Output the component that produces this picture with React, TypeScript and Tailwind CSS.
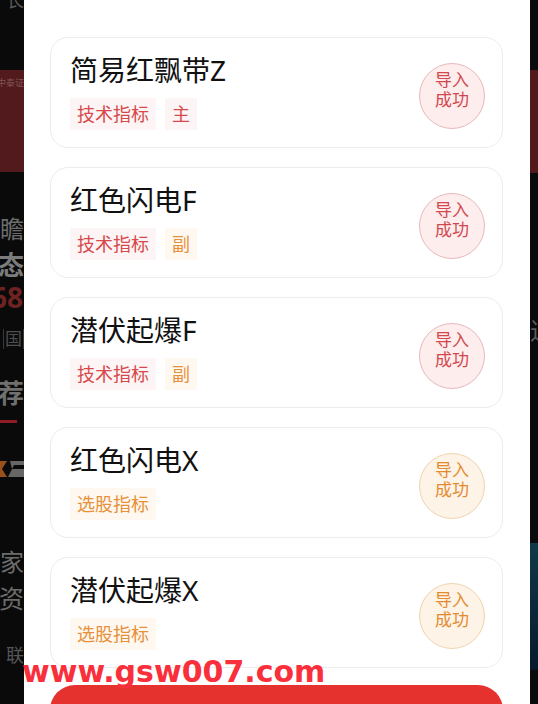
import { memo } from "react";

type Tone = "red" | "orange";

type Indicator = {
  title: string;
  tags: { label: string; tone: Tone }[];
  tone: Tone;
};

const indicators: Indicator[] = [
  {
    title: "简易红飘带Z",
    tags: [
      { label: "技术指标", tone: "red" },
      { label: "主", tone: "red" },
    ],
    tone: "red",
  },
  {
    title: "红色闪电F",
    tags: [
      { label: "技术指标", tone: "red" },
      { label: "副", tone: "orange" },
    ],
    tone: "red",
  },
  {
    title: "潜伏起爆F",
    tags: [
      { label: "技术指标", tone: "red" },
      { label: "副", tone: "orange" },
    ],
    tone: "red",
  },
  {
    title: "红色闪电X",
    tags: [{ label: "选股指标", tone: "orange" }],
    tone: "orange",
  },
  {
    title: "潜伏起爆X",
    tags: [{ label: "选股指标", tone: "orange" }],
    tone: "orange",
  },
];

const Tag = ({ label, tone }: { label: string; tone: Tone }) => (
  <div
    className={`h-[32px] px-[7px] text-[18px] leading-[32px] whitespace-nowrap ${
      tone === "red" ? "bg-[#fdf5f5] text-[#d6484a]" : "bg-[#fff8f0] text-[#e6913a]"
    }`}
  >
    {label}
  </div>
);

const Badge = ({ tone }: { tone: Tone }) => (
  <div
    className={`mt-[7px] w-[66px] h-[66px] shrink-0 rounded-full border flex flex-col items-center justify-center pb-[12px] text-[17px] leading-[20px] ${
      tone === "red"
        ? "bg-[#fdeded] border-[#e8b9bc] text-[#d2474d]"
        : "bg-[#fdf3e6] border-[#efd4af] text-[#e48b30]"
    }`}
  >
    <span>导入</span>
    <span>成功</span>
  </div>
);

const Card = memo(({ item }: { item: Indicator }) => (
  <div className="h-[111px] shrink-0 rounded-[18px] border border-[#ececec] bg-white flex flex-row items-center justify-between pl-[19px] pr-[17px]">
    <div className="self-stretch flex flex-col pt-[14px]">
      <div className="text-[28px] leading-[36px] text-[#111111]">{item.title}</div>
      <div className="mt-[10px] flex flex-row gap-[9px]">
        {item.tags.map((t) => (
          <Tag key={t.label} label={t.label} tone={t.tone} />
        ))}
      </div>
    </div>
    <Badge tone={item.tone} />
  </div>
));

const Row = ({
  className = "",
  children,
}: {
  className?: string;
  children?: React.ReactNode;
}) => (
  <div className={`shrink-0 flex flex-row justify-end items-center overflow-hidden ${className}`}>
    {children}
  </div>
);

const LeftStrip = () => (
  <div className="w-[24px] shrink-0 h-full flex flex-col overflow-hidden bg-[#0a0a0a] text-[#6c6c6c]">
    <Row className="h-[10px] items-end">
      <span className="shrink-0 text-[18px] leading-[20px] text-[#5a5a5a]">长</span>
    </Row>
    <div className="mt-[60px] h-[102px] shrink-0 bg-[#531a1d] flex flex-col justify-start pt-[8px] overflow-hidden">
      <div className="flex flex-row justify-end overflow-hidden">
        <span className="shrink-0 text-[9px] leading-[10px] text-[#7e5656]">中泰证</span>
      </div>
    </div>
    <Row className="mt-[44px] h-[26px]">
      <span className="shrink-0 text-[24px] leading-[26px]">瞻</span>
    </Row>
    <Row className="mt-[9px] h-[28px]">
      <span className="shrink-0 text-[26px] leading-[28px] font-bold text-[#7c7c7c]">间态</span>
    </Row>
    <Row className="mt-[4px] h-[28px]">
      <span className="shrink-0 text-[28px] leading-[28px] font-bold text-[#6e2222] pr-[1px]">368</span>
    </Row>
    <Row className="mt-[18px] h-[20px]">
      <span className="shrink-0 text-[17px] leading-[20px] text-[#4f4f4f] border border-[#3a3a3a] px-[1px]">国</span>
    </Row>
    <Row className="mt-[30px] h-[28px]">
      <span className="shrink-0 text-[26px] leading-[28px] font-bold text-[#707070]">推荐</span>
    </Row>
    <div className="mt-[13px] h-[3px] w-[17px] shrink-0 bg-[#8e1c25]" />
    <Row className="mt-[34px] h-[24px]">
      <svg width="24" height="24" viewBox="0 0 24 24" className="shrink-0">
        <path d="M0 4 L7 4 L2 12 L7 20 L0 20 Z" fill="#9a501a" />
        <path d="M10 4 L24 4 L24 8 L14 8 L12 12 L24 12 L24 20 L8 20 L12 12 Z" fill="#666666" />
      </svg>
    </Row>
    <Row className="mt-[68px] h-[26px]">
      <span className="shrink-0 text-[24px] leading-[26px]">国家</span>
    </Row>
    <Row className="mt-[9px] h-[28px]">
      <span className="shrink-0 text-[25px] leading-[28px]">投资</span>
    </Row>
    <Row className="mt-[33px] h-[20px]">
      <span className="shrink-0 text-[18px] leading-[20px] text-[#555555]">联</span>
    </Row>
  </div>
);

const RightStrip = () => (
  <div className="w-[8px] shrink-0 h-full flex flex-col overflow-hidden bg-[#0b0b0b]">
    <div className="mt-[70px] h-[103px] shrink-0 bg-[#531a1d]" />
    <div className="mt-[145px] h-[26px] shrink-0 overflow-hidden flex flex-row">
      <span className="shrink-0 text-[24px] leading-[26px] text-[#5c5c5c]">近</span>
    </div>
    <div className="mt-[199px] h-[127px] shrink-0 bg-gradient-to-b from-[#0f3a4a] to-[#071a2c]" />
  </div>
);

export default function App() {
  return (
    <div className="relative w-[538px] h-[704px] overflow-hidden flex flex-row bg-[#0a0a0a] font-['Noto_Sans','Noto_Sans_CJK_SC',sans-serif]">
      <LeftStrip />
      <div className="w-[506px] shrink-0 h-full bg-white flex flex-col gap-[19px] pt-[37px] pl-[26px] pr-[27px]">
        {indicators.map((item) => (
          <Card key={item.title} item={item} />
        ))}
        <div className="-mt-[2px] h-[50px] shrink-0 rounded-full bg-[#e5322f]" />
      </div>
      <RightStrip />
      <div className="absolute left-[22px] top-[657px] text-[30px] leading-[30px] font-bold text-[#fa2f3c] font-['DejaVu_Sans',sans-serif] whitespace-nowrap">
        www.gsw007.com
      </div>
    </div>
  );
}
